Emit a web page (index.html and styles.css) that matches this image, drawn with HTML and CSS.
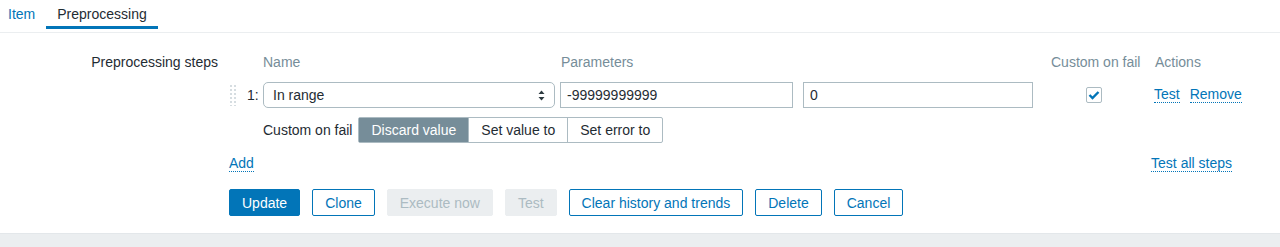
FILE: index.html
```html
<!DOCTYPE html>
<html lang="en">
<head>
  <meta charset="UTF-8" />
  <title>Item preprocessing</title>
  <link rel="stylesheet" href="styles.css">
</head>
<body>
  <div class="tabs">
    <a class="tab first">Item</a>
    <a class="tab active">Preprocessing</a>
  </div>

  <div class="form">
    <div class="form-label">Preprocessing steps</div>
    <div class="form-field">
      <div class="step-row head">
        <div class="col-num"></div>
        <div class="col-name">Name</div>
        <div class="col-p1">Parameters</div>
        <div class="col-p2"></div>
        <div class="col-fail">Custom on fail</div>
        <div class="col-act">Actions</div>
      </div>

      <div class="step-row">
        <div class="col-num">
          <span class="drag"></span>
          <span class="num">1:</span>
        </div>
        <div class="col-name">
          <div class="select">
            <span>In range</span>
            <svg class="arrows" width="7" height="11" viewBox="0 0 7 11">
              <path d="M3.5 0.5 L6.5 4 L0.5 4 Z" fill="#2d3a40"/>
              <path d="M3.5 10.5 L6.5 7 L0.5 7 Z" fill="#2d3a40"/>
            </svg>
          </div>
        </div>
        <div class="col-p1"><div class="input">-99999999999</div></div>
        <div class="col-p2"><div class="input">0</div></div>
        <div class="col-fail">
          <span class="checkbox">
            <svg width="12" height="10" viewBox="0 0 12 10">
              <path d="M1.5 5 L4.5 8 L10.5 2" fill="none" stroke="#0275b8" stroke-width="2.4"/>
            </svg>
          </span>
        </div>
        <div class="col-act">
          <a class="link">Test</a>
          <a class="link">Remove</a>
        </div>
      </div>

      <div class="step-row fail-row">
        <div class="col-num"></div>
        <div class="fail-opts">
          <span class="fail-label">Custom on fail</span>
          <div class="segmented">
            <span class="seg on">Discard value</span>
            <span class="seg">Set value to</span>
            <span class="seg">Set error to</span>
          </div>
        </div>
      </div>

      <div class="step-row add-row">
        <a class="link add">Add</a>
        <a class="link test-all">Test all steps</a>
      </div>

      <div class="buttons">
        <button class="btn primary">Update</button>
        <button class="btn">Clone</button>
        <button class="btn" disabled>Execute now</button>
        <button class="btn" disabled>Test</button>
        <button class="btn">Clear history and trends</button>
        <button class="btn">Delete</button>
        <button class="btn">Cancel</button>
      </div>
    </div>
  </div>

  <div class="footer"></div>
</body>
</html>
```

FILE: styles.css
```css
body {
  margin: 0;
  font-family: 'Liberation Sans', Arial, sans-serif;
  font-size: 14px;
  color: #1f2c33;
  background: #fff;
}
.tabs {
  display: flex;
  height: 29px;
  border-bottom: 3px solid transparent;
  box-shadow: 0 1px 0 #ebeef0;
}
.tab {
  display: block;
  padding: 0 11px;
  line-height: 28px;
  color: #0275b8;
  cursor: pointer;
}
.tab.first {
  padding-left: 8px;
}
.tab.active {
  color: #1f2c33;
  border-bottom: 3px solid #0275b8;
}
.form {
  display: flex;
  padding-top: 20px;
}
.form-label {
  width: 218px;
  text-align: right;
  line-height: 20px;
}
.form-field {
  margin-left: 11px;
}
.step-row {
  display: flex;
  align-items: center;
}
.step-row.head {
  height: 20px;
  color: #768d99;
}
.col-num {
  width: 34px;
  display: flex;
  align-items: center;
}
.col-name {
  width: 297px;
}
.col-p1 {
  width: 243px;
}
.col-p2 {
  width: 230px;
}
.col-fail {
  width: 87px;
  margin-left: 17px;
  display: flex;
  justify-content: center;
}
.head .col-fail {
  justify-content: flex-start;
  white-space: nowrap;
}
.col-act {
  margin-left: 17px;
  display: flex;
  gap: 10px;
}
.head .col-p1 {
  padding-left: 1px;
}
.step-row + .step-row {
  margin-top: 10px;
}
.drag {
  width: 8px;
  height: 22px;
  background-image: radial-gradient(circle, #d6dde1 1px, transparent 1.3px);
  background-size: 4px 4px;
}
.num {
  margin-left: 10px;
}
.select, .input {
  box-sizing: border-box;
  height: 26px;
  line-height: 24px;
  border: 1px solid #acbbc2;
  padding: 0 9px;
  background: #fff;
}
.select {
  width: 292px;
  border-radius: 5px;
  display: flex;
  justify-content: space-between;
  align-items: center;
}
.input {
  width: 233px;
  padding: 0 6px;
}
.col-p2 .input {
  width: 230px;
}
.checkbox {
  box-sizing: border-box;
  width: 16px;
  height: 16px;
  border: 1px solid #acbbc2;
  border-radius: 2px;
  display: flex;
  align-items: center;
  justify-content: center;
}
.link {
  color: #0275b8;
  border-bottom: 1px dotted #0275b8;
  line-height: 15px;
  cursor: pointer;
}
.step-row.fail-row {
  margin-top: 9px;
}
.fail-opts {
  display: flex;
  align-items: center;
}
.fail-label {
  margin-right: 6px;
}
.segmented {
  display: flex;
  border: 1px solid #acbbc2;
  border-radius: 2px;
}
.seg {
  height: 24px;
  line-height: 24px;
  padding: 0 12px;
  border-left: 1px solid #acbbc2;
}
.seg:first-child {
  border-left: none;
}
.seg.on {
  background: #768d99;
  color: #fff;
}
.step-row.add-row {
  margin-top: 13px;
  width: 1003px;
  justify-content: space-between;
}
.buttons {
  display: flex;
  gap: 12px;
  margin-top: 17px;
}
.btn {
  font-family: inherit;
  font-size: 14px;
  height: 27px;
  padding: 0 12px;
  border: 1px solid #0275b8;
  border-radius: 2px;
  background: #fff;
  color: #0275b8;
}
.btn.primary {
  background: #0275b8;
  color: #fff;
}
.btn:disabled {
  background: #ebeef0;
  border-color: #ebeef0;
  color: #acbbc2;
}
.footer {
  margin-top: 17px;
  height: 30px;
  background: #ebeef0;
  border-top: 1px solid #e3e7ea;
}
```
